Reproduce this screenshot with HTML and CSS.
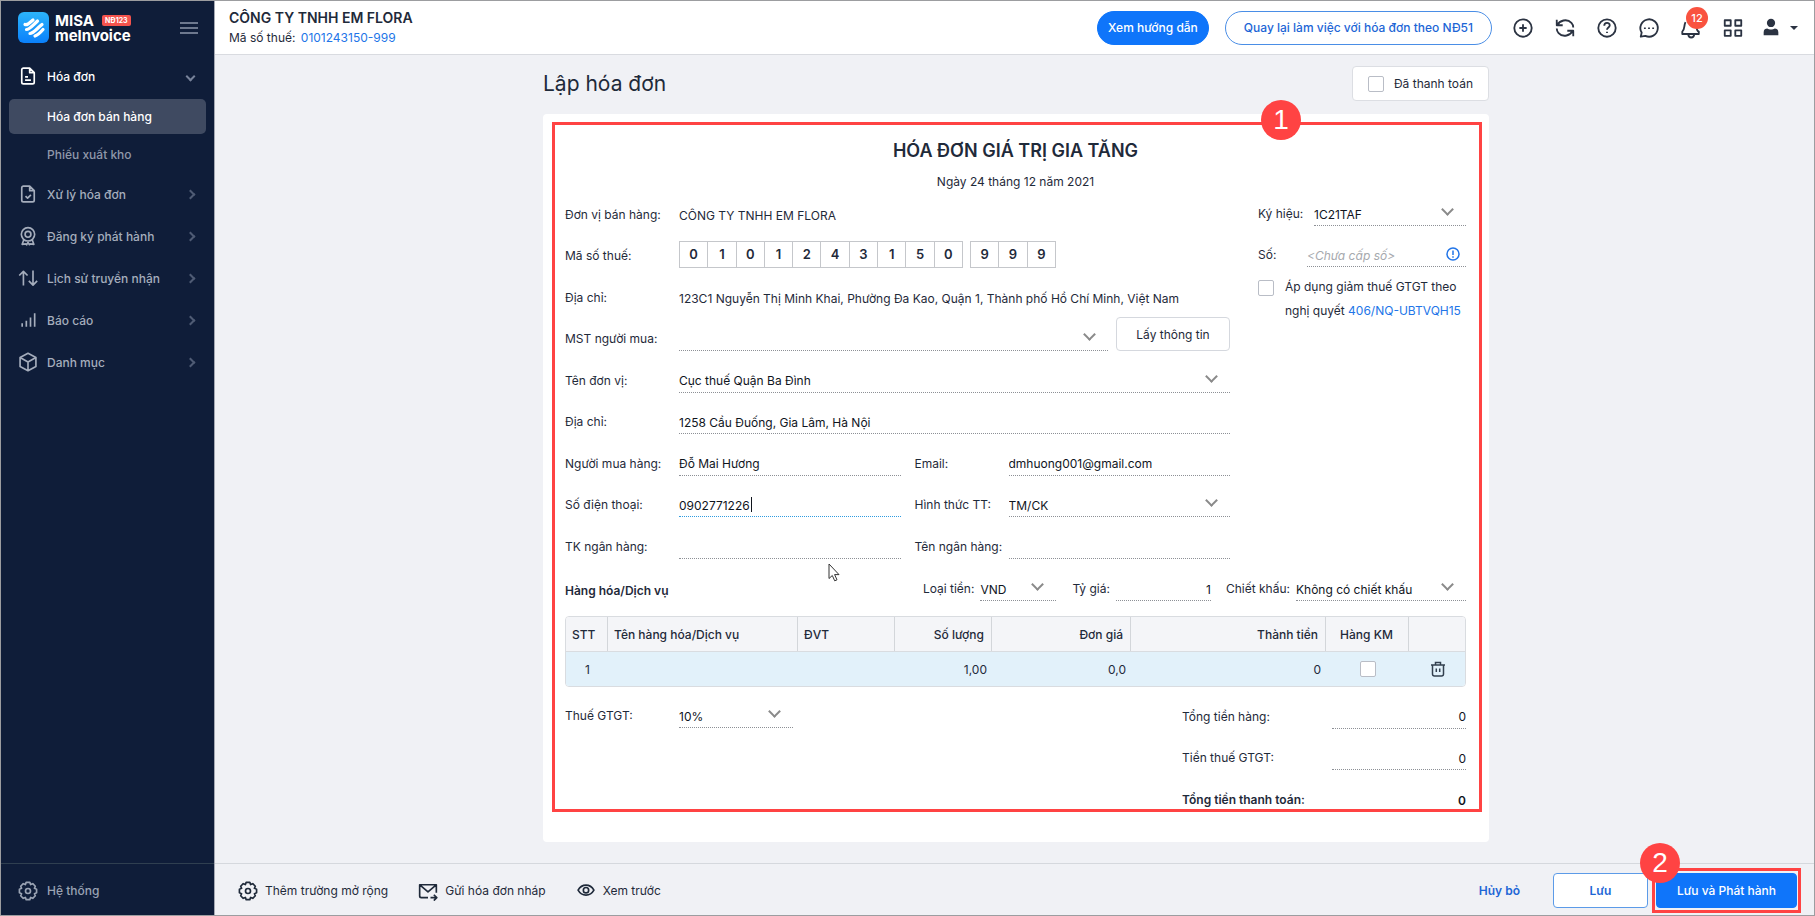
FILE: index.html
```html
<!DOCTYPE html>
<html lang="vi">
<head>
    <meta charset="UTF-8">
    <meta name="viewport" content="width=device-width, initial-scale=1.0">
    <title>Lập hóa đơn</title>
    <link rel="stylesheet" href="styles.css">
</head>
<body>

<div class="app">
    <aside class="sidebar">
        <div class="brand">
            <svg class="brand-logo" viewBox="0 0 31 31">
                <defs>
                    <linearGradient id="logo-bg" x1="0" y1="0" x2="0" y2="1">
                        <stop offset="0" stop-color="#2cb4fb"/>
                        <stop offset="1" stop-color="#0a80fb"/>
                    </linearGradient>
                </defs>
                <rect width="31" height="31" rx="6" fill="url(#logo-bg)"/>
                <g fill="none" stroke="#fff" stroke-width="3.2" stroke-linecap="round" stroke-linejoin="round">
                    <path d="M7 12.500c2 1 4-1 8-4.500"/>
                    <path d="M8.500 17.500c3 0 5-3 11-8.500"/>
                    <path d="M12 21.500c3 0 6-4 12-9"/>
                    <path d="M17 24c3-1 5-3 8-6.500"/>
                </g>
            </svg>
            <div class="brand-name">
                <div class="brand-top">MISA <span class="brand-tag">NĐ123</span></div>
                <div>meInvoice</div>
            </div>
            <button class="menu-toggle" type="button" aria-label="Menu">
                <svg width="18" height="12" viewBox="0 0 18 12"><path d="M0 1h18M0 6h18M0 11h18" stroke="#8d97ab" stroke-width="1.500"/></svg>
            </button>
        </div>

        <nav class="menu">
            <a class="menu-item open" href="#">
                <svg class="icon" viewBox="0 0 24 24"><path d="M14 2.500H6.500a2 2 0 0 0-2 2v15a2 2 0 0 0 2 2h11a2 2 0 0 0 2-2V8zM14 2.500V8h5.500M8.500 13H12M8.500 17h7"/></svg>
                Hóa đơn
                <span class="arrow down"></span>
            </a>
            <a class="menu-sub active" href="#">Hóa đơn bán hàng</a>
            <a class="menu-sub" href="#">Phiếu xuất kho</a>
            <a class="menu-item" href="#">
                <svg class="icon" viewBox="0 0 24 24"><path d="M14 2.500H6.500a2 2 0 0 0-2 2v15a2 2 0 0 0 2 2h11a2 2 0 0 0 2-2V8zM14 2.500V8h5.500M9 14.500l2.500 2.500 4-4"/></svg>
                Xử lý hóa đơn
                <span class="arrow"></span>
            </a>
            <a class="menu-item" href="#">
                <svg class="icon" viewBox="0 0 24 24"><circle cx="12" cy="10" r="8"/><circle cx="12" cy="10" r="3.500"/><path d="M7 16.500L5 22l4-.5 1.500 1 1.500-3 1.500 3 1.500-1 4 .5-2-5.500"/></svg>
                Đăng ký phát hành
                <span class="arrow"></span>
            </a>
            <a class="menu-item" href="#">
                <svg class="icon" viewBox="0 0 24 24"><path d="M6.500 21V4M1.500 9L6.500 4l5 5M18 3v17M13 15.500l5 5 5-5"/></svg>
                Lịch sử truyền nhận
                <span class="arrow"></span>
            </a>
            <a class="menu-item" href="#">
                <svg class="icon" viewBox="0 0 24 24"><path d="M5 20v-4M10 20v-7M15 20V9M20 20V4"/></svg>
                Báo cáo
                <span class="arrow"></span>
            </a>
            <a class="menu-item" href="#">
                <svg class="icon" viewBox="0 0 24 24"><path d="M12 1.500l9.500 5v11l-9.500 5-9.500-5v-11zM2.500 6.500L12 12l9.500-5.500M12 12v10.500"/></svg>
                Danh mục
                <span class="arrow"></span>
            </a>
        </nav>

        <a class="sidebar-footer" href="#">
            <svg class="icon" viewBox="0 0 24 24"><circle cx="12" cy="12" r="3"/><path d="M22.300 9.800v4.400l-2.600 1 1.100 2.500-3.100 3.100-2.500-1.100-1 2.600H9.800l-1-2.600-2.500 1.100-3.100-3.100 1.100-2.500-2.600-1V9.800l2.600-1-1.100-2.500 3.100-3.100 2.500 1.100 1-2.600h4.400l1 2.600 2.500-1.100 3.100 3.100-1.100 2.500z"/></svg>
            Hệ thống
        </a>
    </aside>

    <div class="page">
        <header class="topbar">
            <div class="company">
                <div class="company-name">CÔNG TY TNHH EM FLORA</div>
                <div class="company-tax">Mã số thuế: <a href="#">0101243150-999</a></div>
            </div>
            <button class="pill pill-primary" type="button">Xem hướng dẫn</button>
            <button class="pill" type="button">Quay lại làm việc với hóa đơn theo NĐ51</button>
            <div class="tools">
                <button class="tool" type="button" aria-label="Thêm">
                    <svg viewBox="0 0 24 24"><circle cx="12" cy="12" r="9.500"/><path d="M12 8v8M8 12h8"/></svg>
                </button>
                <button class="tool" type="button" aria-label="Tải lại">
                    <svg viewBox="0 0 24 24"><path d="M3 3v6h6.500M3.500 9C6 4 14 1 19 6.500c1.300 1.400 2 3 2 5M21 21v-6h-6.500M20.500 15C18 20 10 23 5 17.500c-1.300-1.400-2-3-2-5"/></svg>
                </button>
                <button class="tool" type="button" aria-label="Trợ giúp">
                    <svg viewBox="0 0 24 24"><circle cx="12" cy="12" r="9.500"/><path d="M9 9.500c0-4 6-4 6-.5 0 2.500-3 2.500-3 5M12 16v1.500"/></svg>
                </button>
                <button class="tool" type="button" aria-label="Tin nhắn">
                    <svg viewBox="0 0 24 24"><path d="M3 21.500l1-4.500A9.500 9.500 0 1 1 8 20.600zM7.500 11.500v1.500M12 11.500v1.500M16.500 11.500v1.500"/></svg>
                </button>
                <button class="tool" type="button" aria-label="Thông báo">
                    <svg viewBox="0 0 24 24"><path d="M6 5.500c-2 4-.5 8-3.500 10.500v2.500h18V16c-2-1-2.500-3-2.500-6M9 19c.5 4.500 6 4.500 6.500 0"/></svg>
                    <span class="badge">12</span>
                </button>
                <button class="tool" type="button" aria-label="Ứng dụng">
                    <svg viewBox="0 0 24 24"><path d="M3 3.500h6.500v6H3zM14.500 3.500H21v6h-6.500zM3 14.500h6.500v6H3zM14.500 14.500H21v6h-6.500z"/></svg>
                </button>
                <button class="tool user" type="button" aria-label="Tài khoản">
                    <svg viewBox="0 0 24 24"><circle cx="12" cy="6.500" r="4.500"/><path d="M4 20v-3.500c0-3 2-4 4-4 2 1.500 6 1.500 8 0 2 0 4 1 4 4V20z"/></svg>
                    <span class="caret-down"></span>
                </button>
            </div>
        </header>

        <main class="content">
            <div class="content-inner">
                <div class="title-row">
                    <h1>Lập hóa đơn</h1>
                    <label class="paid"><input class="check" type="checkbox"> Đã thanh toán</label>
                </div>

                <form class="card" id="invoice-form">
                    <h2>HÓA ĐƠN GIÁ TRỊ GIA TĂNG</h2>
                    <p class="date">Ngày 24 tháng 12 năm 2021</p>

                    <div class="info">
                        <div class="info-main">
                            <div class="row">
                                <span class="label">Đơn vị bán hàng:</span>
                                <span class="static">CÔNG TY TNHH EM FLORA</span>
                            </div>
                            <div class="row">
                                <span class="label">Mã số thuế:</span>
                                <div class="digits">
                                    <span>0</span><span>1</span><span>0</span><span>1</span><span>2</span><span>4</span><span>3</span><span>1</span><span>5</span><span>0</span>
                                </div>
                                <div class="digits digits-branch">
                                    <span>9</span><span>9</span><span>9</span>
                                </div>
                            </div>
                            <div class="row">
                                <span class="label">Địa chỉ:</span>
                                <span class="static">123C1 Nguyễn Thị Minh Khai, Phường Đa Kao, Quận 1, Thành phố Hồ Chí Minh, Việt Nam</span>
                            </div>
                            <div class="row">
                                <label class="label" for="buyer-tax">MST người mua:</label>
                                <div class="select"><select class="field" id="buyer-tax"><option></option></select></div>
                                <button class="btn-info" type="button">Lấy thông tin</button>
                            </div>
                            <div class="row">
                                <label class="label" for="unit-name">Tên đơn vị:</label>
                                <div class="select"><select class="field" id="unit-name"><option>Cục thuế Quận Ba Đình</option></select></div>
                            </div>
                            <div class="row">
                                <label class="label" for="address">Địa chỉ:</label>
                                <input class="field" id="address" type="text" value="1258 Cầu Đuống, Gia Lâm, Hà Nội">
                            </div>
                            <div class="row">
                                <label class="label" for="buyer">Người mua hàng:</label>
                                <input class="field" id="buyer" type="text" value="Đỗ Mai Hương">
                                <label class="label label-second" for="email">Email:</label>
                                <input class="field" id="email" type="text" value="dmhuong001@gmail.com">
                            </div>
                            <div class="row">
                                <label class="label" for="phone">Số điện thoại:</label>
                                <div class="phone">
                                    <input class="field field-active" id="phone" type="text" value="0902771226">
                                    <span class="text-caret"></span>
                                </div>
                                <label class="label label-second" for="payment">Hình thức TT:</label>
                                <div class="select"><select class="field" id="payment"><option>TM/CK</option></select></div>
                            </div>
                            <div class="row">
                                <label class="label" for="account">TK ngân hàng:</label>
                                <input class="field" id="account" type="text">
                                <label class="label label-second" for="bank">Tên ngân hàng:</label>
                                <input class="field" id="bank" type="text">
                            </div>
                        </div>

                        <div class="info-side">
                            <div class="row">
                                <label class="label" for="symbol">Ký hiệu:</label>
                                <div class="select"><select class="field" id="symbol"><option>1C21TAF</option></select></div>
                            </div>
                            <div class="row number-row">
                                <label class="label" for="number">Số:</label>
                                <input class="field" id="number" type="text" placeholder="&lt;Chưa cấp số&gt;">
                                <svg class="info-icon" viewBox="0 0 14 14"><circle cx="7" cy="7" r="6"/><path d="M7 3.500v4.500M7 9.300v1.400"/></svg>
                            </div>
                            <div class="reduce">
                                <input class="check" id="reduce" type="checkbox">
                                <label for="reduce">Áp dụng giảm thuế GTGT theo nghị quyết <a href="#">406/NQ-UBTVQH15</a></label>
                            </div>
                        </div>
                    </div>

                    <div class="goods-bar">
                        <h3>Hàng hóa/Dịch vụ</h3>
                        <label class="label" for="currency">Loại tiền:</label>
                        <div class="select currency"><select class="field" id="currency"><option>VND</option></select></div>
                        <label class="label" for="rate">Tỷ giá:</label>
                        <input class="field rate" id="rate" type="text" value="1">
                        <label class="label" for="discount">Chiết khấu:</label>
                        <div class="select discount"><select class="field" id="discount"><option>Không có chiết khấu</option></select></div>
                    </div>

                    <table class="goods">
                        <thead>
                            <tr>
                                <th class="col-no">STT</th>
                                <th class="col-name">Tên hàng hóa/Dịch vụ</th>
                                <th class="col-unit">ĐVT</th>
                                <th class="col-qty num">Số lượng</th>
                                <th class="col-price num">Đơn giá</th>
                                <th class="col-total num">Thành tiền</th>
                                <th class="col-promo mid">Hàng KM</th>
                                <th class="col-del"></th>
                            </tr>
                        </thead>
                        <tbody>
                            <tr>
                                <td class="mid">1</td>
                                <td></td>
                                <td></td>
                                <td class="num">1,00</td>
                                <td class="num">0,0</td>
                                <td class="num">0</td>
                                <td class="mid"><input class="check" type="checkbox" aria-label="Hàng KM"></td>
                                <td class="mid">
                                    <button class="delete" type="button" aria-label="Xóa">
                                        <svg viewBox="0 0 16 16"><path d="M1 4h14M5.500 4V1.500h5V4M2.500 4v9a2 2 0 0 0 2 2h7a2 2 0 0 0 2-2V4M6.300 7.500v3.500M9.700 7.500v3.500"/></svg>
                                    </button>
                                </td>
                            </tr>
                        </tbody>
                    </table>

                    <div class="summary">
                        <div class="vat">
                            <div class="row">
                                <label class="label" for="vat">Thuế GTGT:</label>
                                <div class="select"><select class="field" id="vat"><option>10%</option></select></div>
                            </div>
                        </div>
                        <div class="totals">
                            <div class="row">
                                <label class="label" for="sum">Tổng tiền hàng:</label>
                                <input class="field" id="sum" type="text" value="0">
                            </div>
                            <div class="row">
                                <label class="label" for="tax">Tiền thuế GTGT:</label>
                                <input class="field" id="tax" type="text" value="0">
                            </div>
                            <div class="row grand">
                                <label class="label" for="grand">Tổng tiền thanh toán:</label>
                                <input class="field" id="grand" type="text" value="0">
                            </div>
                        </div>
                    </div>

                    <div class="mark-frame"></div>
                    <span class="mark mark-one">1</span>
                    <svg class="pointer" viewBox="0 0 12 19"><path d="M1 1v14.500l3.300-3 2.400 5.300 2.300-1-2.400-5.200H11z"/></svg>
                </form>
            </div>
        </main>

        <footer class="actions">
            <button class="action" type="button">
                <svg class="icon" viewBox="0 0 24 24"><circle cx="12" cy="12" r="3"/><path d="M22.300 9.800v4.400l-2.600 1 1.100 2.500-3.100 3.100-2.500-1.100-1 2.600H9.800l-1-2.600-2.500 1.100-3.100-3.100 1.100-2.500-2.600-1V9.800l2.600-1-1.100-2.500 3.100-3.100 2.500 1.100 1-2.600h4.400l1 2.600 2.500-1.100 3.100 3.100-1.100 2.500z"/></svg>
                Thêm trường mở rộng
            </button>
            <button class="action" type="button">
                <svg class="icon" viewBox="0 0 24 24"><path d="M12 20H4a2 2 0 0 1-2-2V4.500h20V14M2.500 5L12 13l9.500-8M15 20h7M19 16.500l3.500 3.500-3.500 3.500"/></svg>
                Gửi hóa đơn nháp
            </button>
            <button class="action" type="button">
                <svg class="icon" viewBox="0 0 24 24"><path d="M2.500 11C7 3 17 3 21.500 11 17 19 7 19 2.500 11z"/><circle cx="12" cy="11" r="3.200"/></svg>
                Xem trước
            </button>
            <div class="spacer"></div>
            <button class="btn btn-text" type="button">Hủy bỏ</button>
            <button class="btn btn-outline" type="button">Lưu</button>
            <div class="publish">
                <button class="btn btn-primary" type="submit" form="invoice-form">Lưu và Phát hành</button>
                <span class="mark mark-two">2</span>
            </div>
        </footer>
    </div>
</div>

</body>
</html>
```
FILE: styles.css
```css
* {
    box-sizing: border-box;
}

body {
    margin: 0;
    font-family: Inter, "Liberation Sans", sans-serif;
    font-size: 12px;
    color: #1f2a3a;
    background-color: #f0f1f5;
}

a {
    color: #2275e8;
    text-decoration: none;
}

button, input, select {
    font-family: inherit;
    font-size: inherit;
    color: inherit;
}

button {
    cursor: pointer;
}

.app {
    display: flex;
    min-height: 100vh;
    border: 1px solid #9c9da0;
}

/* Sidebar */
.sidebar {
    width: 214px;
    flex-shrink: 0;
    display: flex;
    flex-direction: column;
    background-color: #0f1d39;
    border-right: 1px solid #a5a9b3;
    font-weight: 500;
}

.brand {
    display: flex;
    align-items: center;
    gap: 6px;
    height: 53px;
    padding: 0 16px 0 17px;
}

.brand-logo {
    width: 31px;
    height: 31px;
}

.brand-name {
    flex: 1;
    font-size: 15px;
    line-height: 15px;
    font-weight: 700;
    color: #fff;
}

.brand-top {
    display: flex;
    align-items: center;
    gap: 8px;
}

.brand-tag {
    padding: 0 3px;
    border-radius: 2px;
    background-color: #f4534d;
    font-size: 7px;
    line-height: 11px;
}

.menu-toggle {
    padding: 0;
    border: 0;
    background: none;
}

.menu-toggle svg {
    display: block;
}

.menu {
    flex: 1;
    padding: 1px 8px 0;
}

.menu-item {
    display: flex;
    align-items: center;
    gap: 9px;
    height: 42px;
    padding: 0 9px;
    color: #a5adbc;
}

.menu-item.open {
    color: #fff;
}

.icon {
    width: 20px;
    height: 20px;
    fill: none;
    stroke: currentColor;
    stroke-width: 2;
    stroke-linejoin: round;
}

.arrow {
    width: 7px;
    height: 7px;
    margin-left: auto;
    margin-right: 3px;
    border-top: 2px solid #4f5b74;
    border-right: 2px solid #4f5b74;
    transform: rotate(45deg);
}

.arrow.down {
    border-color: #77829a;
    transform: rotate(135deg);
}

.menu-sub {
    display: block;
    height: 35px;
    margin: 2px 0 1px;
    padding-left: 38px;
    border-radius: 5px;
    line-height: 35px;
    color: #8f98aa;
}

.menu-sub.active {
    margin-bottom: 3px;
    background-color: #3f4a61;
    color: #fff;
}

.sidebar-footer {
    display: flex;
    align-items: center;
    gap: 9px;
    height: 52px;
    padding: 2px 0 0 17px;
    border-top: 1px solid #2f3f50;
    color: #9aa3b3;
}

/* Top bar */
.page {
    flex: 1;
    display: flex;
    flex-direction: column;
    min-width: 0;
}

.topbar {
    display: flex;
    align-items: center;
    height: 54px;
    padding: 0 16px 0 14px;
    background-color: #fff;
    border-bottom: 1px solid #d9dbe0;
}

.company {
    flex: 1;
}

.company-name {
    font-size: 14px;
    line-height: 20px;
    font-weight: 600;
}

.company-tax {
    line-height: 20px;
}

.company-tax a {
    margin-left: 2px;
}

.pill {
    height: 34px;
    margin-right: 16px;
    padding: 0 18px;
    border: 1px solid #4a8ee6;
    border-radius: 17px;
    background-color: #fff;
    font-weight: 500;
    color: #1d66d6;
}

.pill-primary {
    padding: 0 10px;
    border-color: #0f75fa;
    background-color: #0f75fa;
    color: #fff;
}

.tools {
    display: flex;
    gap: 20px;
    margin-left: 4px;
}

.tool {
    position: relative;
    display: flex;
    align-items: center;
    width: 22px;
    padding: 0;
    border: 0;
    background: none;
    color: #2b3342;
}

.tool svg {
    width: 22px;
    height: 22px;
    fill: none;
    stroke: currentColor;
    stroke-width: 2;
    stroke-linejoin: round;
}

.tool.user {
    width: auto;
    gap: 8px;
    margin-left: -4px;
}

.tool.user svg {
    fill: currentColor;
    stroke: none;
}

.caret-down {
    border: 4px solid transparent;
    border-top-color: #2b3342;
    border-bottom: 0;
}

.badge {
    position: absolute;
    top: -10px;
    left: 6px;
    width: 22px;
    height: 22px;
    border-radius: 11px;
    background-color: #f9523f;
    font-size: 11px;
    line-height: 22px;
    font-weight: 500;
    text-align: center;
    color: #fff;
}

/* Content */
.content {
    flex: 1;
    padding: 11px 20px 20px 23px;
}

.content-inner {
    max-width: 946px;
    margin: 0 auto;
}

.title-row {
    display: flex;
    align-items: center;
    justify-content: space-between;
    margin-bottom: 13px;
}

h1 {
    margin: 0;
    font-size: 21px;
    line-height: 26px;
    font-weight: 400;
}

.paid {
    display: flex;
    align-items: center;
    gap: 10px;
    height: 35px;
    padding: 0 15px;
    border: 1px solid #dcdee3;
    border-radius: 4px;
    background-color: #fff;
}

.check {
    appearance: none;
    width: 16px;
    height: 16px;
    margin: 0;
    border: 1px solid #b9bdc6;
    border-radius: 2px;
    background-color: #fff;
}

.card {
    position: relative;
    padding: 25px 23px 30px 22px;
    border-radius: 4px;
    background-color: #fff;
}

h2 {
    margin: 0;
    font-size: 18px;
    line-height: 24px;
    font-weight: 600;
    text-align: center;
}

.date {
    margin: 9px 0 0;
    line-height: 20px;
    text-align: center;
}

.info {
    display: flex;
    gap: 28px;
    margin-top: -7px;
}

.info-main {
    flex: 1;
    display: grid;
    grid-auto-rows: 1fr;
    min-height: 374px;
}

.info-side {
    width: 208px;
}

.row {
    display: flex;
    align-items: flex-end;
    min-height: 41px;
}

.label {
    width: 114px;
    flex-shrink: 0;
    line-height: 24px;
}

.label-second {
    width: 94px;
    margin-left: 14px;
}

.static {
    line-height: 22px;
}

.field {
    flex: 1;
    display: block;
    width: 100%;
    min-width: 0;
    height: 24px;
    padding: 1px 0 0;
    border: 0;
    border-bottom: 1px dotted #8d9096;
    border-radius: 0;
    outline: none;
    background: none;
    appearance: none;
    color: #10151d;
}

.field::placeholder {
    font-style: italic;
    color: #a6a9ae;
}

.field-active {
    border-bottom-color: #2f9be0;
}

.select {
    position: relative;
    flex: 1;
}

.select::after {
    content: "";
    position: absolute;
    top: 3px;
    right: 14px;
    width: 7px;
    height: 7px;
    border-right: 2px solid #8a8a8a;
    border-bottom: 2px solid #8a8a8a;
    transform: rotate(45deg);
    pointer-events: none;
}

.phone {
    position: relative;
    flex: 1;
}

.text-caret {
    position: absolute;
    top: 4px;
    left: 72px;
    width: 1px;
    height: 15px;
    background-color: #10151d;
}

.digits {
    display: flex;
    width: 284px;
    margin-right: 7px;
    border: 1px solid #c5c7cb;
    font-size: 13px;
    font-weight: 600;
}

.digits-branch {
    width: 86px;
}

.digits span {
    flex: 1;
    line-height: 25px;
    text-align: center;
}

.digits span + span {
    border-left: 1px solid #c5c7cb;
}

.btn-info {
    width: 114px;
    height: 34px;
    margin-left: 8px;
    border: 1px solid #d5d8de;
    border-radius: 4px;
    background-color: #fff;
}

.info-side .label {
    width: 56px;
}

.number-row {
    position: relative;
}

.info-side .number-row .label {
    width: 49px;
}

.info-icon {
    position: absolute;
    right: 6px;
    bottom: 6px;
    width: 14px;
    height: 14px;
    fill: none;
    stroke: #2275e8;
    stroke-width: 1.5;
}

.reduce {
    display: flex;
    gap: 11px;
    margin-top: 8px;
    line-height: 24px;
}

.reduce .check {
    flex-shrink: 0;
    margin-top: 5px;
}

.goods-bar {
    display: flex;
    align-items: flex-end;
    height: 42px;
}

.goods-bar .label {
    width: auto;
    margin-right: 6px;
}

h3 {
    flex: 1;
    margin: 0;
    font-size: 12px;
    line-height: 20px;
    font-weight: 600;
}

.currency {
    flex: 0 0 76px;
    margin-right: 16px;
}

.rate {
    flex: 0 0 95px;
    margin-right: 15px;
    text-align: right;
}

.discount {
    flex: 0 0 170px;
}

/* Goods table */
.goods {
    width: 100%;
    margin-top: 15px;
    table-layout: fixed;
    border-collapse: separate;
    border-spacing: 0;
    border: 1px solid #d9dce0;
    border-radius: 4px;
    overflow: hidden;
}

.goods th, .goods td {
    height: 35px;
    padding: 0 5px 0 6px;
    text-align: left;
}

.goods th {
    height: 34px;
    padding-right: 7px;
    border-right: 1px solid #d3d6da;
    background-color: #f4f5f8;
    font-weight: 500;
    white-space: nowrap;
}

.goods th:last-child {
    border-right: 0;
}

.goods td {
    border-top: 1px solid #d9dce0;
    background-color: #e2f1fa;
}

.goods .num {
    text-align: right;
}

.goods .mid {
    text-align: center;
}

.col-no { width: 42px; }
.col-unit { width: 97px; }
.col-qty { width: 97px; }
.col-price { width: 139px; }
.col-total { width: 195px; }
.col-promo { width: 83px; }
.col-del { width: 56px; }

.goods .check, .delete {
    display: block;
    margin: 0 auto;
}

.delete {
    padding: 0;
    border: 0;
    background: none;
}

.delete svg {
    display: block;
    width: 16px;
    height: 16px;
    fill: none;
    stroke: #33404f;
    stroke-width: 1.5;
}

/* Summary */
.summary {
    display: flex;
    justify-content: space-between;
}

.vat {
    width: 228px;
}

.totals {
    display: grid;
    grid-auto-rows: 1fr;
    width: 284px;
    min-height: 125px;
}

.totals .label {
    width: 150px;
}

.totals .field {
    text-align: right;
}

.grand {
    font-weight: 600;
}

.grand .field {
    border-bottom-color: transparent;
    font-weight: 600;
}

/* Step marks */
.mark-frame {
    position: absolute;
    top: 8px;
    right: 7px;
    bottom: 30px;
    left: 9px;
    border: 3px solid #ff4343;
    pointer-events: none;
}

.mark {
    position: absolute;
    width: 40px;
    height: 40px;
    border-radius: 50%;
    background-color: #ff4343;
    font-family: "Liberation Sans", Arial, sans-serif;
    font-size: 28px;
    line-height: 40px;
    text-align: center;
    color: #fff;
}

.mark-one {
    top: -14px;
    right: 188px;
}

.mark-two {
    top: -28px;
    left: -15px;
}

.pointer {
    position: absolute;
    top: 449px;
    left: 285px;
    width: 12px;
    height: 19px;
    fill: #fff;
    stroke: #333;
}

/* Bottom actions */
.actions {
    display: flex;
    align-items: center;
    height: 52px;
    padding: 2px 13px 0 23px;
    border-top: 1px solid #d5d8dd;
}

.action {
    display: flex;
    align-items: center;
    gap: 7px;
    margin-right: 30px;
    padding: 0;
    border: 0;
    background: none;
    color: #1f2a3a;
}

.spacer {
    flex: 1;
}

.btn {
    height: 35px;
    border: 1px solid #0f75fa;
    border-radius: 4px;
    font-weight: 600;
}

.btn-text {
    margin-right: 22px;
    padding: 0 10px;
    border-color: transparent;
    background: none;
    color: #1d66d6;
}

.btn-outline {
    width: 95px;
    margin-right: 4px;
    border-color: #5c9be8;
    background-color: #fff;
    color: #1d66d6;
}

.btn-primary {
    width: 141px;
    background-color: #0f75fa;
    font-weight: 500;
    color: #fff;
}

.publish {
    position: relative;
    padding: 2px 1px;
    border: 3px solid #ff4343;
}
```
